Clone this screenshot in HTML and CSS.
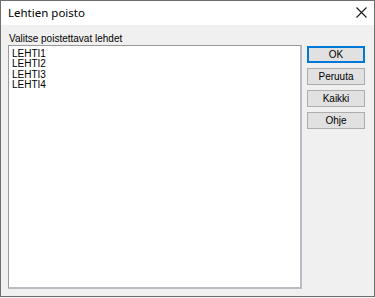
FILE: index.html
```html
<!DOCTYPE html>
<html lang="fi">
<head>
  <meta charset="UTF-8">
  <title>Lehtien poisto</title>
  <link rel="stylesheet" href="styles.css">
</head>
<body>
  <div class="dialog">
    <div class="titlebar">
      <span class="title">Lehtien poisto</span>
      <svg class="close" width="11" height="11" viewBox="0 0 11 11">
        <path d="M0.5 0.5 L10.5 10.5 M10.5 0.5 L0.5 10.5" stroke="#1a1a1a" stroke-width="1.1" fill="none"/>
      </svg>
    </div>
    <div class="content">
      <div class="left">
        <div class="label">Valitse poistettavat lehdet</div>
        <div class="listbox">
          <div class="item">LEHTI1</div>
          <div class="item">LEHTI2</div>
          <div class="item">LEHTI3</div>
          <div class="item">LEHTI4</div>
        </div>
      </div>
      <div class="buttons">
        <button class="btn default">OK</button>
        <button class="btn">Peruuta</button>
        <button class="btn">Kaikki</button>
        <button class="btn">Ohje</button>
      </div>
    </div>
  </div>
</body>
</html>
```

FILE: styles.css
```css
body {
  margin: 0;
  background-color: #f0f0f0;
  font-family: "Liberation Sans", Arial, sans-serif;
}

.dialog {
  width: 375px;
  height: 297px;
  box-sizing: border-box;
  border: 1px solid #6e6e6e;
  background: #f0f0f0;
  display: flex;
  flex-direction: column;
}

.titlebar {
  height: 24px;
  background: white;
  display: flex;
  align-items: center;
  justify-content: space-between;
  padding: 0 7px 0 7px;
  flex-shrink: 0;
}

.title {
  font-family: "Noto Sans", sans-serif;
  font-size: 11.5px;
  color: #000;
  margin-top: -2px;
}

.close {
  margin-right: 0;
  margin-top: -1px;
}

.content {
  flex: 1;
  display: flex;
  padding: 7px 0 7px 7px;
}

.left {
  width: 294px;
  display: flex;
  flex-direction: column;
}

.label {
  font-size: 10px;
  line-height: 13px;
  color: #000;
  padding-left: 1px;
}

.listbox {
  flex: 1;
  background: white;
  border-top: 1px solid #9a9a9a;
  border-left: 1px solid #9a9a9a;
  border-right: 2px solid #b9bcc2;
  border-bottom: 2px solid #b9bcc2;
  padding: 3px 3px;
}

.item {
  font-size: 10px;
  line-height: 10.3px;
  color: #000;
}

.buttons {
  display: flex;
  flex-direction: column;
  gap: 5px;
  margin-left: 5px;
  padding-top: 14px;
}

.btn {
  width: 58px;
  height: 17px;
  padding: 0;
  background: #e1e1e1;
  border: 1px solid #adadad;
  font-family: "Liberation Sans", Arial, sans-serif;
  font-size: 10px;
  color: #000;
}

.btn.default {
  border: 2px solid #0078d7;
}
```
